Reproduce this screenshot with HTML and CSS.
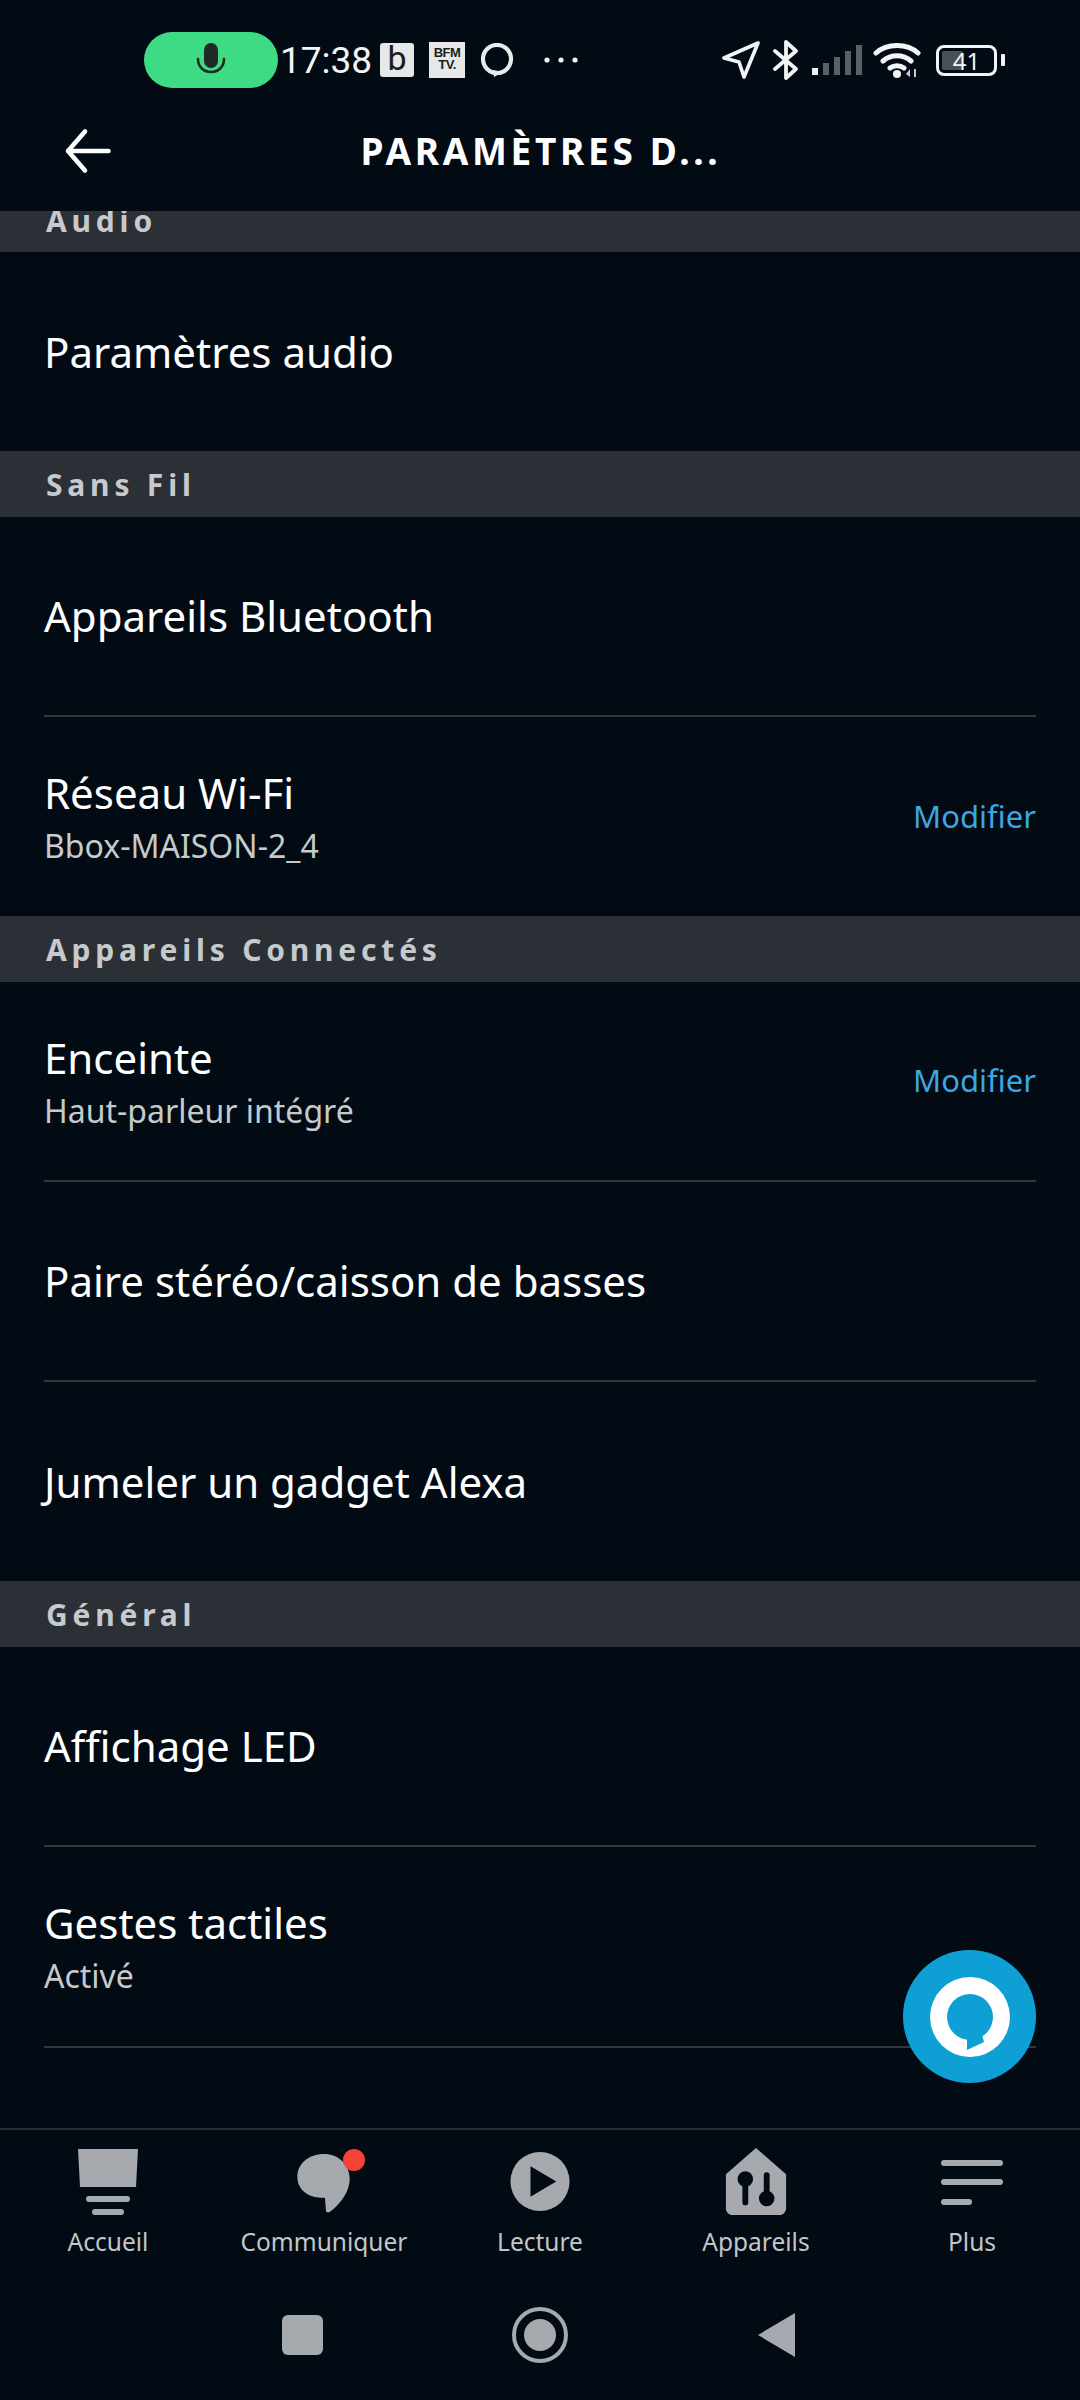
FILE: index.html
```html
<!DOCTYPE html>
<html lang="fr">
<head>
    <meta charset="UTF-8">
    <meta name="viewport" content="width=device-width, initial-scale=1.0">
    <title>Paramètres de l'appareil</title>
    <link rel="stylesheet" href="styles.css">
</head>
<body>
    <div class="phone">
        <div class="status-bar">
            <div class="mic-pill">
                <svg width="30" height="36" viewBox="0 0 30 36"><rect x="8" y="1" width="14" height="25" rx="7" fill="#1f2a26"/><path d="M2 17c0 8 6 13 13 13s13-5 13-13" fill="none" stroke="#1f2a26" stroke-width="2.6" stroke-linecap="round"/></svg>
            </div>
            <span class="clock">17:38</span>
            <span class="notif notif-b">b</span>
            <span class="notif notif-bfm">BFM<br>TV.</span>
            <svg class="notif-ring" width="34" height="34" viewBox="0 0 34 34"><circle cx="17" cy="16" r="14" fill="none" stroke="#e8eaeb" stroke-width="4.2"/><path d="M13 27l1 7 9-5z" fill="#e8eaeb"/></svg>
            <svg class="notif-dots" width="36" height="6" viewBox="0 0 36 6"><circle cx="4" cy="3" r="2.6" fill="#eef0f1"/><circle cx="18" cy="3" r="2.6" fill="#eef0f1"/><circle cx="32" cy="3" r="2.6" fill="#eef0f1"/></svg>
            <div class="status-right">
                <svg class="st-loc" width="38" height="38" viewBox="0 0 38 38"><path d="M36 2 2 17l15 4 5 15z" fill="none" stroke="#f2f4f5" stroke-width="3.6" stroke-linejoin="round"/></svg>
                <svg class="st-bt" width="26" height="40" viewBox="0 0 26 40"><path d="M2 11l21 18-10 9V2l10 9L2 29" fill="none" stroke="#f2f4f5" stroke-width="3.8" stroke-linejoin="round" stroke-linecap="round"/></svg>
                <svg class="st-signal" width="50" height="32" viewBox="0 0 50 32"><rect x="0" y="24" width="6" height="7" fill="#eef0f1"/><rect x="11" y="19" width="6" height="12" fill="#5b6066"/><rect x="22" y="13" width="6" height="18" fill="#5b6066"/><rect x="33" y="7" width="6" height="24" fill="#5b6066"/><rect x="44" y="1" width="6" height="30" fill="#5b6066"/></svg>
                <svg class="st-wifi" width="48" height="36" viewBox="0 0 48 36"><path d="M3 11C14 1 34 1 45 11M10 19c8-7 20-7 28 0M17 26c4-3 10-3 14 0" fill="none" stroke="#f2f4f5" stroke-width="5" stroke-linecap="round"/><circle cx="24" cy="32" r="4" fill="#f2f4f5"/><path d="M33 32l4-5v8zM41 27h2v8h-2z" fill="#c9ccce"/></svg>
                <div class="battery"><span class="battery-fill"></span><span class="battery-num">41</span></div>
                <span class="battery-nip"></span>
            </div>
        </div>

        <header class="top-bar">
            <svg class="back" width="48" height="48" viewBox="0 0 48 48"><path d="M44.5 24H4M21 4.5 4 24l17 19.5" fill="none" stroke="#fff" stroke-width="4.6" stroke-linecap="round" stroke-linejoin="round"/></svg>
            <h1>PARAMÈTRES D...</h1>
        </header>

        <main class="settings">
            <div class="section section-cut"><span>Audio</span></div>
            <div class="row row-plain"><div class="row-text"><div class="row-title">Paramètres audio</div></div></div>

            <div class="section"><span>Sans Fil</span></div>
            <div class="row"><div class="row-text"><div class="row-title">Appareils Bluetooth</div></div></div>
            <div class="row row-plain">
                <div class="row-text"><div class="row-title">Réseau Wi-Fi</div><div class="row-sub">Bbox-MAISON-2_4</div></div>
                <a class="row-action">Modifier</a>
            </div>

            <div class="section"><span>Appareils Connectés</span></div>
            <div class="row">
                <div class="row-text"><div class="row-title">Enceinte</div><div class="row-sub">Haut-parleur intégré</div></div>
                <a class="row-action">Modifier</a>
            </div>
            <div class="row"><div class="row-text"><div class="row-title">Paire stéréo/caisson de basses</div></div></div>
            <div class="row row-plain"><div class="row-text"><div class="row-title">Jumeler un gadget Alexa</div></div></div>

            <div class="section"><span>Général</span></div>
            <div class="row"><div class="row-text"><div class="row-title">Affichage LED</div></div></div>
            <div class="row row-last">
                <div class="row-text"><div class="row-title">Gestes tactiles</div><div class="row-sub">Activé</div></div>
            </div>
        </main>

        <button class="alexa-fab">
            <svg width="80" height="80" viewBox="-40 -40 80 80"><circle r="40" fill="#fff"/><circle r="23" fill="#0ea0d4"/><path d="M-3 20v13l17-8-2-7z" fill="#0ea0d4"/></svg>
        </button>

        <nav class="tabs">
            <div class="tab">
                <div class="tab-icon">
                    <svg width="60" height="66" viewBox="0 0 60 66"><path d="M0 0h60l-2 38H2z" fill="#a6aaae"/><rect x="8" y="47" width="44" height="6" rx="3" fill="#a6aaae"/><rect x="14" y="60" width="32" height="6" rx="3" fill="#a6aaae"/></svg>
                </div>
                <span>Accueil</span>
            </div>
            <div class="tab">
                <div class="tab-icon tab-icon-chat">
                    <svg width="56" height="59" viewBox="0 0 58 62"><path d="M29 0c15 0 27 11 27 26 0 13-9 26-21 35-2 1-4 0-4-2l-1-13C13 47 1 38 1 24 1 10 13 0 29 0z" fill="#a6aaae"/></svg>
                    <span class="tab-badge"></span>
                </div>
                <span>Communiquer</span>
            </div>
            <div class="tab">
                <div class="tab-icon">
                    <svg width="60" height="61" viewBox="0 0 62 64"><circle cx="31" cy="32" r="31" fill="#a6aaae"/><path d="M21 16v32l27-16z" fill="#020a13"/></svg>
                </div>
                <span>Lecture</span>
            </div>
            <div class="tab">
                <div class="tab-icon">
                    <svg width="62" height="67" viewBox="0 0 62 69"><path d="M31 0 62 27v35c0 4-3 7-7 7H7c-4 0-7-3-7-7V27z" fill="#a6aaae"/><circle cx="20" cy="32" r="8" fill="#020a13"/><rect x="17" y="32" width="6" height="27" rx="3" fill="#020a13"/><circle cx="42" cy="52" r="8" fill="#020a13"/><rect x="39" y="25" width="6" height="27" rx="3" fill="#020a13"/></svg>
                </div>
                <span>Appareils</span>
            </div>
            <div class="tab">
                <div class="tab-icon">
                    <svg width="62" height="67" viewBox="0 0 62 67"><rect y="12" width="62" height="6" rx="3" fill="#a6aaae"/><rect y="31" width="62" height="6" rx="3" fill="#a6aaae"/><rect y="51" width="31" height="6" rx="3" fill="#a6aaae"/></svg>
                </div>
                <span>Plus</span>
            </div>
        </nav>

        <div class="nav-bar">
            <span class="nav-square"></span>
            <svg width="56" height="56" viewBox="0 0 56 56"><circle cx="28" cy="28" r="26" fill="none" stroke="#a6aaae" stroke-width="4"/><circle cx="28" cy="28" r="16" fill="#a6aaae"/></svg>
            <svg width="38" height="46" viewBox="0 0 38 46"><path d="M38 1v44L1 23z" fill="#a6aaae"/></svg>
        </div>
    </div>
</body>
</html>
```

FILE: styles.css
```css
body {
    margin: 0;
    background: #020a13;
    color: #fff;
    font-family: "Noto Sans", sans-serif;
}

.phone {
    position: relative;
    width: 1080px;
    height: 2400px;
    display: flex;
    flex-direction: column;
    overflow: hidden;
}

/* status bar */
.status-bar {
    display: flex;
    align-items: center;
    height: 56px;
    padding: 32px 75px 0 144px;
    flex-shrink: 0;
}

.mic-pill {
    display: flex;
    align-items: center;
    justify-content: center;
    width: 134px;
    height: 56px;
    border-radius: 28px;
    background: #3ddc84;
}

.clock {
    width: 100px;
    margin-left: 2px;
    font-family: Roboto, sans-serif;
    font-size: 37px;
    color: #f2f4f5;
}

.notif {
    display: block;
    background: #e6e8e9;
    color: #1a1d20;
    text-align: center;
}

.notif-b {
    width: 34px;
    height: 34px;
    border-radius: 3px;
    font-family: Roboto, sans-serif;
    font-size: 34px;
    line-height: 30px;
}

.notif-bfm {
    width: 36px;
    height: 36px;
    margin-left: 15px;
    padding-top: 5px;
    box-sizing: border-box;
    font-family: "Liberation Sans", sans-serif;
    font-size: 13px;
    font-weight: 700;
    letter-spacing: -0.5px;
    line-height: 12px;
}

.notif-ring {
    margin-left: 15px;
}

.notif-dots {
    margin-left: 29px;
}

.status-right {
    display: flex;
    align-items: center;
    margin-left: auto;
}

.st-bt {
    margin-left: 13px;
}

.st-signal {
    margin-left: 13px;
}

.st-wifi {
    margin-left: 11px;
}

.battery {
    position: relative;
    box-sizing: border-box;
    width: 61px;
    height: 31px;
    margin-left: 15px;
    border: 3px solid #f2f4f5;
    border-radius: 8px;
    text-align: center;
    font-size: 24px;
    line-height: 25px;
    color: #f2f4f5;
}

.battery-fill {
    position: absolute;
    top: 3px;
    bottom: 3px;
    left: 3px;
    width: 21px;
    background: #4b5056;
    border-radius: 2px;
}

.battery-num {
    position: relative;
}

.battery-nip {
    width: 4px;
    height: 12px;
    margin-left: 4px;
    background: #f2f4f5;
    border-radius: 1px;
}

/* header */
.top-bar {
    position: relative;
    display: flex;
    align-items: center;
    justify-content: center;
    height: 123px;
    padding-left: 2px;
    flex-shrink: 0;
}

.top-bar h1 {
    margin: 2px 0 0;
    font-size: 37px;
    font-weight: 700;
    letter-spacing: 3.7px;
}

.back {
    position: absolute;
    left: 64px;
    top: 39px;
}

/* list */
.settings {
    flex: 1;
    min-height: 0;
    overflow: hidden;
}

.section {
    display: flex;
    align-items: center;
    height: 66px;
    padding: 0 46px;
    background: #2b2f36;
    font-size: 30px;
    font-weight: 700;
    letter-spacing: 4.8px;
    color: #c6cacd;
}

.section-cut {
    height: 41px;
    align-items: flex-end;
    overflow: hidden;
}

.section-cut span {
    margin-bottom: 11px;
}

.row {
    display: flex;
    align-items: center;
    justify-content: space-between;
    box-sizing: border-box;
    height: 200px;
    margin: 0 44px;
    border-bottom: 2px solid #33373d;
}

.row-plain {
    height: 199px;
    border-bottom: none;
}

.row-last {
    height: 201px;
}

.row-title {
    font-size: 42px;
    line-height: 54px;
}

.row-sub {
    margin-top: 5px;
    font-size: 32px;
    line-height: 42px;
    color: #c6cacd;
}

.row-action {
    margin-top: -2px;
    font-size: 31px;
    color: #3aa7e2;
}

/* alexa button */
.alexa-fab {
    position: absolute;
    left: 903px;
    top: 1950px;
    display: flex;
    align-items: center;
    justify-content: center;
    width: 133px;
    height: 133px;
    padding: 0;
    border: none;
    border-radius: 50%;
    background: #0ea0d4;
}

/* bottom tabs */
.tabs {
    display: grid;
    grid-template-columns: repeat(5, 1fr);
    height: 142px;
    padding-top: 18px;
    box-sizing: border-box;
    border-top: 2px solid #262b33;
    flex-shrink: 0;
}

.tab {
    display: flex;
    flex-direction: column;
    align-items: center;
    color: #c3c6c9;
    font-size: 24.5px;
}

.tab-icon {
    position: relative;
    display: flex;
    align-items: center;
    height: 67px;
}

.tab-icon-chat svg {
    margin-top: 4px;
}

.tab > span {
    margin-top: 10px;
    line-height: 34px;
}

.tab-badge {
    position: absolute;
    top: 1px;
    right: -13px;
    width: 22px;
    height: 22px;
    border-radius: 50%;
    background: #f44336;
}

/* android nav */
.nav-bar {
    display: flex;
    align-items: center;
    justify-content: space-between;
    height: 130px;
    padding: 0 285px 0 282px;
    box-sizing: border-box;
    flex-shrink: 0;
}

.nav-square {
    width: 41px;
    height: 40px;
    border-radius: 6px;
    background: #a6aaae;
}
```
